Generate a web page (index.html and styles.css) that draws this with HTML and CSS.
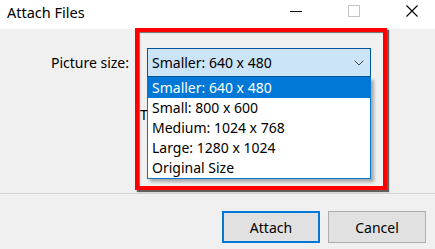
FILE: index.html
```html
<!DOCTYPE html>
<html>
<head>
  <meta charset="UTF-8">
  <title>Attach Files</title>
  <link rel="stylesheet" href="styles.css">
</head>
<body>
    <div class="window">

        <div class="titlebar">
            <span class="title">Attach Files</span>
            <div class="controls">
                <svg class="ctl" width="12" height="12" viewBox="0 0 12 12"><path d="M0 6.5H12" stroke="#000" stroke-width="1"/></svg>
                <svg class="ctl" width="12" height="12" viewBox="0 0 12 12"><rect x="0.5" y="0.5" width="11" height="11" fill="none" stroke="#c4c4c4"/></svg>
                <svg class="ctl" width="12" height="12" viewBox="0 0 12 12"><path d="M0.5 0.5L11.5 11.5M11.5 0.5L0.5 11.5" stroke="#000" stroke-width="1.1"/></svg>
            </div>
        </div>

        <div class="content">
            <div class="row">
                <span class="label">Picture size:</span>
                <div class="comboWrap">
                    <div class="combo">
                        <span>Smaller: 640 x 480</span>
                        <svg width="10" height="6" viewBox="0 0 10 6"><path d="M0.5 0.5L5 5L9.5 0.5" fill="none" stroke="#444" stroke-width="1"/></svg>
                    </div>
                    <ul class="dropList">
                        <li class="selected">Smaller: 640 x 480</li>
                        <li>Small: 800 x 600</li>
                        <li>Medium: 1024 x 768</li>
                        <li>Large: 1280 x 1024</li>
                        <li>Original Size</li>
                    </ul>
                </div>
            </div>
            <div class="row2">
                <span class="label2">To</span>
            </div>
        </div>

        <div class="footer">
            <button class="btn default">Attach</button>
            <button class="btn">Cancel</button>
        </div>

        <div class="highlight"></div>
    </div>
</body>
</html>
```

FILE: styles.css
```css
body {
    margin: 0;
    font-family: "Noto Sans", "Open Sans", sans-serif;
    font-size: 14px;
    color: #000;
    background-color: #f0f0f0;
}

.window {
    position: relative;
    width: 435px;
    height: 249px;
    overflow: hidden;
    background-color: #f0f0f0;
}

.titlebar {
    display: flex;
    align-items: center;
    justify-content: space-between;
    height: 29px;
    background-color: white;
    padding-left: 7px;
    box-sizing: border-box;
}

.title {
    font-size: 14.5px;
    margin-top: -6px;
}

.controls {
    display: flex;
    align-items: flex-start;
    height: 100%;
    padding-top: 5px;
    box-sizing: border-box;
}

.ctl {
    display: block;
    margin-right: 46px;
}

.ctl:last-child {
    margin-right: 17px;
}

.content {
    height: 164px;
    border-bottom: 1px solid #d4d4d4;
    box-sizing: content-box;
}

.row {
    display: flex;
    align-items: flex-start;
    padding-top: 19px;
}

.label {
    width: 129px;
    text-align: right;
    line-height: 29px;
    margin-right: 18px;
}

.comboWrap {
    position: relative;
}

.combo {
    display: flex;
    align-items: center;
    justify-content: space-between;
    width: 224px;
    height: 29px;
    box-sizing: border-box;
    background-color: #cce4f7;
    border: 1px solid #005499;
    padding: 0 6px 0 4px;
}

.dropList {
    position: absolute;
    left: 0;
    top: 29px;
    width: 224px;
    margin: 0;
    padding: 0;
    list-style: none;
    background-color: white;
    border: 1px solid #0078d7;
    box-sizing: border-box;
    box-shadow: 3px 3px 3px rgba(0, 0, 0, 0.3);
    z-index: 2;
}

.dropList li {
    height: 20px;
    line-height: 20px;
    padding-left: 4px;
}

.dropList .selected {
    background-color: #0078d7;
    color: white;
}

.row2 {
    padding-top: 28px;
    padding-left: 140px;
}

/* the rest of this label is covered by the open list */
.label2 {
    display: block;
    width: 7px;
    overflow: hidden;
    white-space: nowrap;
}

.footer {
    display: flex;
    justify-content: flex-end;
    gap: 8px;
    padding: 17px 9px 0 0;
}

.btn {
    width: 98px;
    height: 32px;
    font-family: inherit;
    font-size: 14px;
    background-color: #e1e1e1;
    border: 1px solid #adadad;
    padding: 0;
}

.btn.default {
    border: 2px solid #0078d7;
}

.highlight {
    position: absolute;
    left: 135px;
    top: 28px;
    width: 252px;
    height: 162px;
    box-sizing: border-box;
    border: 4px solid #ff0000;
    box-shadow: 2px 2px 1px rgba(0, 0, 0, 0.6), inset 1px 1px 1px rgba(0, 0, 0, 0.55);
    z-index: 3;
}
```
